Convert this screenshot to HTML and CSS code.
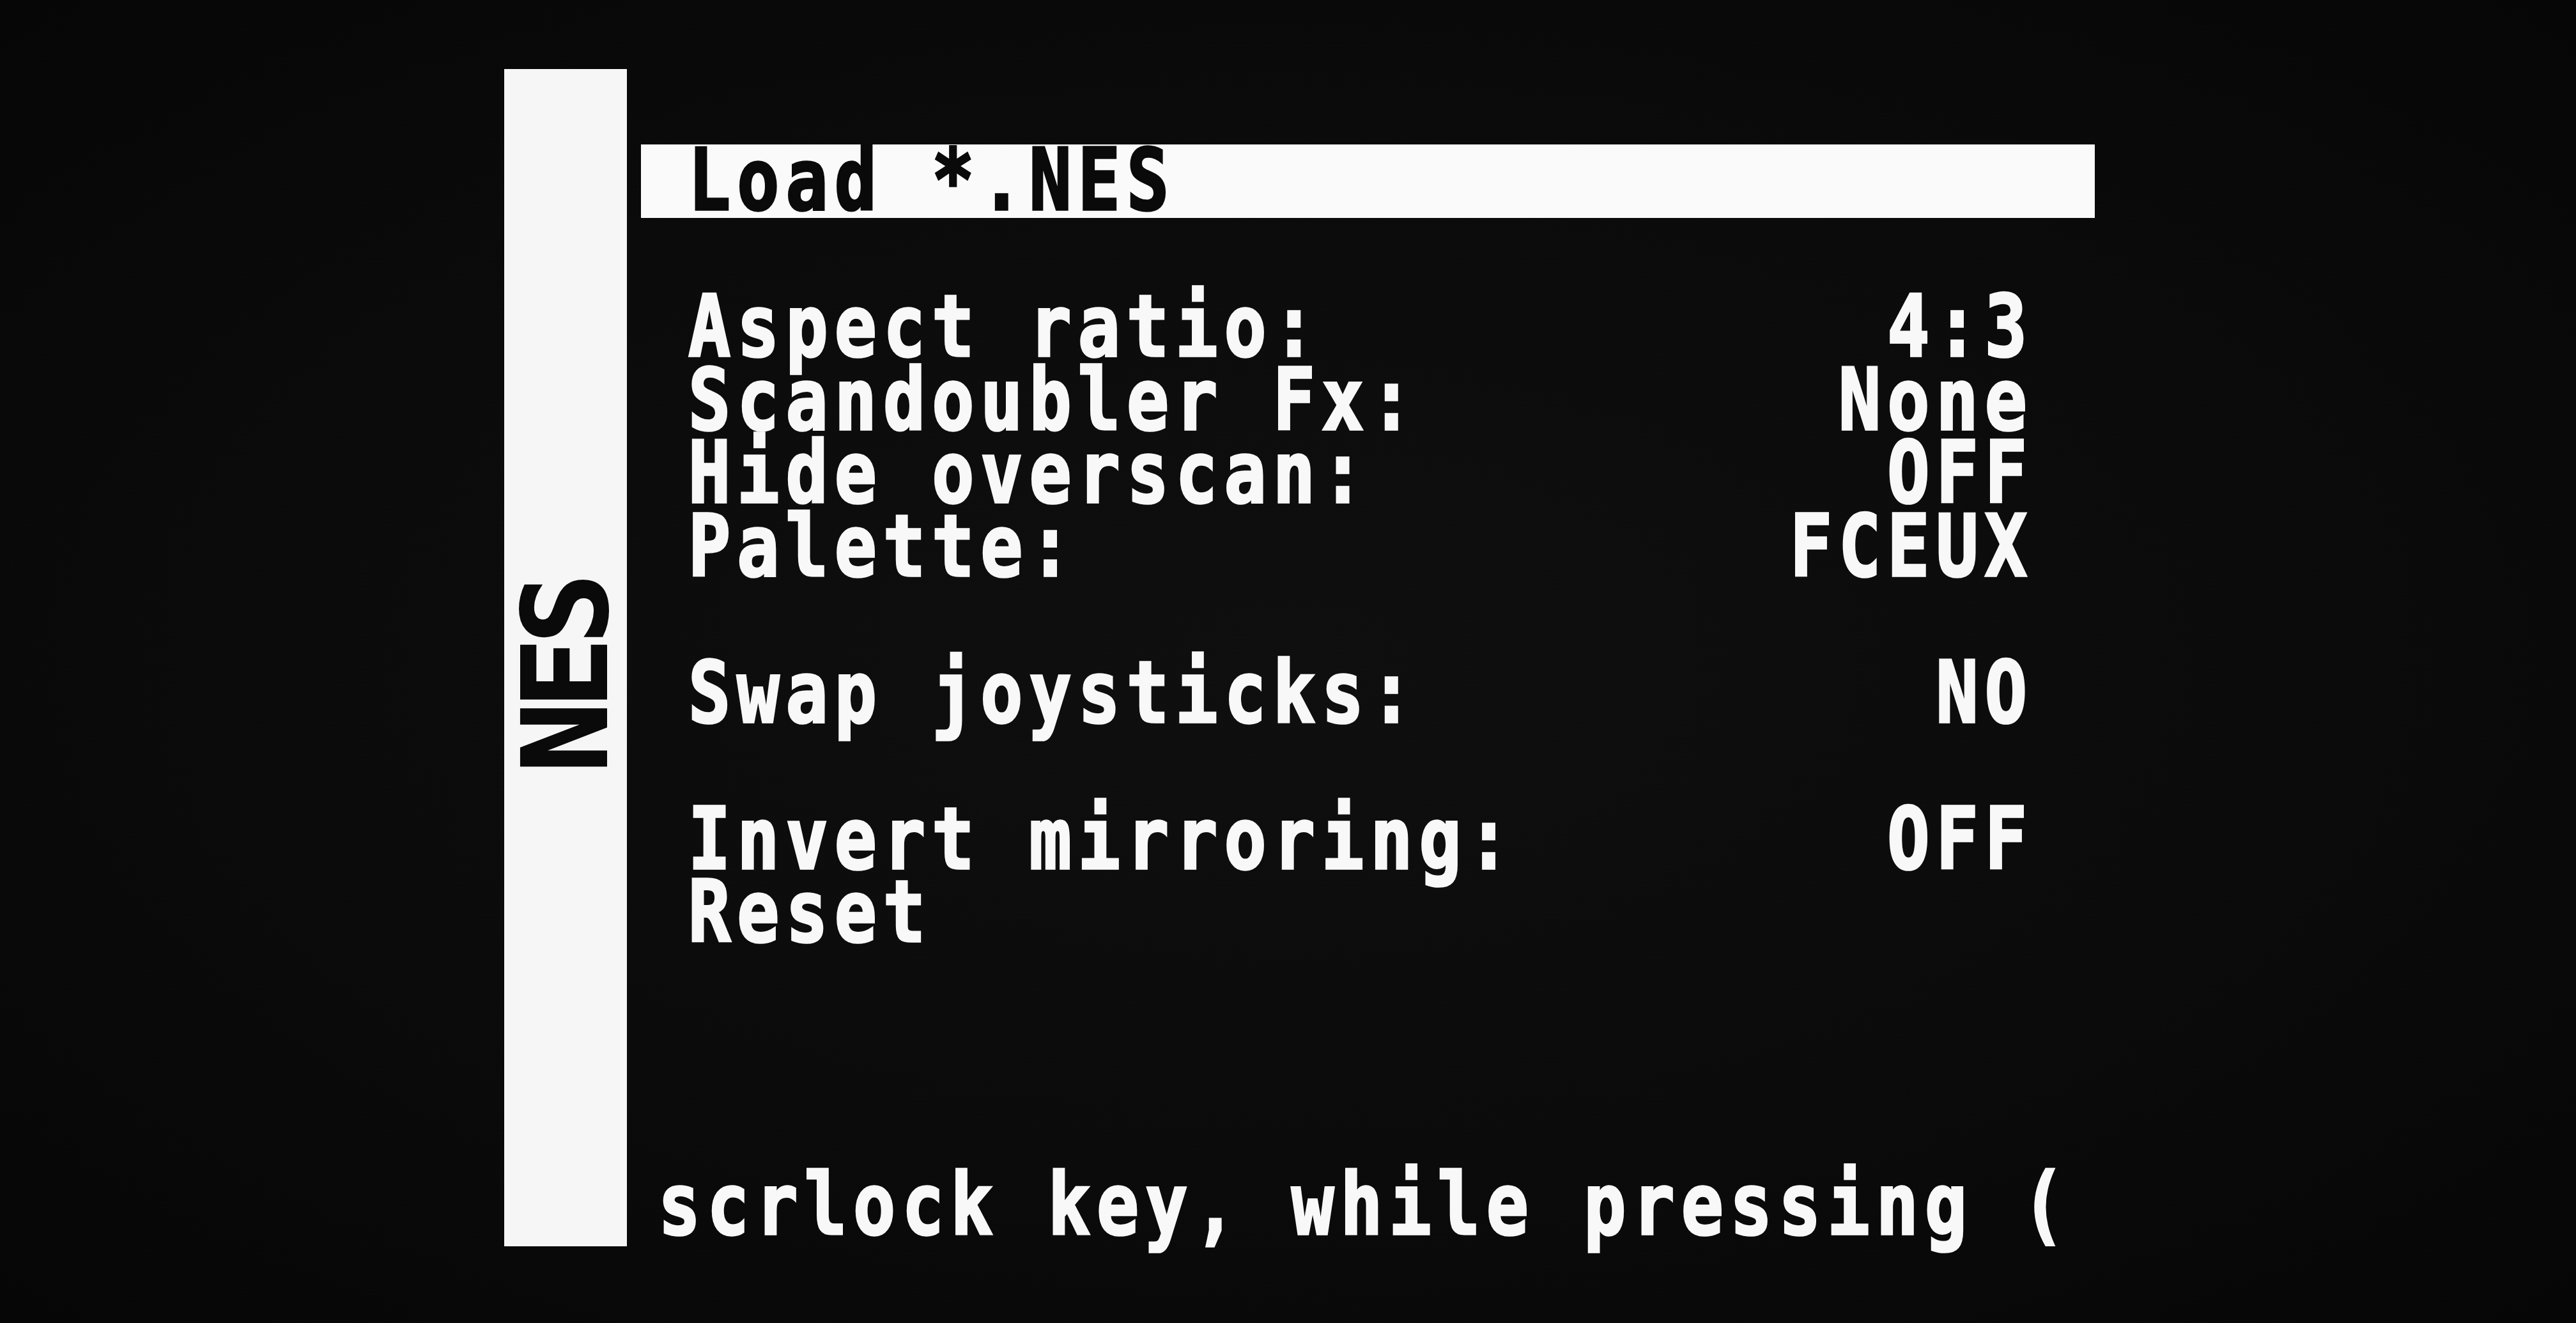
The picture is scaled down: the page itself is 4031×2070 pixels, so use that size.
FILE: index.html
```html
<!DOCTYPE html>
<html lang="en">
<head>
<meta charset="utf-8">
<title>NES</title>
<link rel="stylesheet" href="styles.css">
</head>
<body>
<div class="screen">
  <div class="osd">
    <aside class="side"><span class="side-title">NES</span></aside>
    <main class="menu">
      <div class="row sel"><span class="txt">Load *.NES</span></div>
      <div class="row"></div>
      <div class="row"><span class="txt">Aspect ratio:</span><span class="txt">4:3</span></div>
      <div class="row"><span class="txt">Scandoubler Fx:</span><span class="txt">None</span></div>
      <div class="row"><span class="txt">Hide overscan:</span><span class="txt">OFF</span></div>
      <div class="row"><span class="txt">Palette:</span><span class="txt">FCEUX</span></div>
      <div class="row"></div>
      <div class="row"><span class="txt">Swap joysticks:</span><span class="txt">NO</span></div>
      <div class="row"></div>
      <div class="row"><span class="txt">Invert mirroring:</span><span class="txt">OFF</span></div>
      <div class="row"><span class="txt">Reset</span></div>
      <div class="row"></div>
      <div class="row"></div>
      <div class="row"></div>
      <div class="row scroll"><span class="txt">scrlock key, while pressing (</span></div>
    </main>
  </div>
</div>
</body>
</html>
```

FILE: styles.css
```css
html, body {
  margin: 0;
  padding: 0;
  background: #090909;
}

.screen {
  width: 4031px;
  height: 2070px;
  box-sizing: border-box;
  padding: 108px 0 0 789px;
  background: radial-gradient(ellipse at 50% 50%, #0f0f0f 0%, #0b0b0b 55%, #060606 100%);
  overflow: hidden;
}

.osd {
  display: flex;
  align-items: flex-start;
}

.side {
  width: 192px;
  height: 1842px;
  background: #f6f6f6;
  display: flex;
  align-items: center;
  justify-content: center;
  box-sizing: border-box;
  padding-top: 58px;
}

.side-title {
  writing-mode: vertical-rl;
  transform: rotate(180deg);
  font-family: "DejaVu Sans Mono", "Liberation Mono", monospace;
  font-weight: bold;
  font-size: 184px;
  line-height: 1;
  letter-spacing: -10px;
  color: #0a0a0a;
  -webkit-text-stroke: 2px #0a0a0a;
}

.menu {
  margin-left: 22px;
  width: 2275px;
  padding-top: 118px;
  display: flex;
  flex-direction: column;
}

.row {
  height: 114.5px;
  box-sizing: border-box;
  padding: 0 96px 0 74px;
  display: flex;
  justify-content: space-between;
  align-items: center;
  color: #f8f8f8;
}

.row.sel {
  background: #fafafa;
  color: #0a0a0a;
}

.row.scroll {
  padding-left: 27px;
}

.txt {
  display: inline-block;
  font-family: "DejaVu Sans Mono", "Liberation Mono", monospace;
  font-weight: bold;
  font-size: 110px;
  line-height: 93.8px;
  letter-spacing: 10px;
  white-space: pre;
  transform: scaleY(1.22);
  transform-origin: 50% 50%;
  -webkit-text-stroke: 3px currentColor;
}
```
